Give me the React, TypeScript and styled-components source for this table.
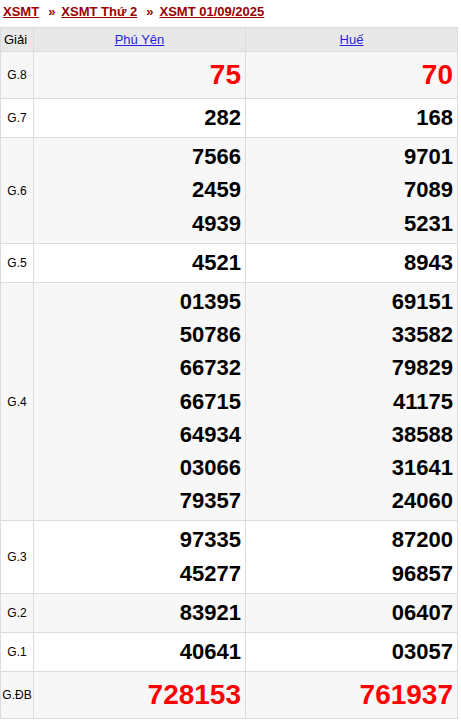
import React from 'react';
import styled, { createGlobalStyle } from 'styled-components';

const GlobalStyle = createGlobalStyle`
  html, body {
    margin: 0;
    padding: 0;
    background: #fff;
    font-family: "Liberation Sans", Arial, sans-serif;
  }
`;

interface Prize {
  label: string;
  results: string[][];
  big?: boolean;
}

const provinces = ['Phú Yên', 'Huế'];

const prizes: Prize[] = [
  { label: 'G.8', results: [['75'], ['70']], big: true },
  { label: 'G.7', results: [['282'], ['168']] },
  { label: 'G.6', results: [['7566', '2459', '4939'], ['9701', '7089', '5231']] },
  { label: 'G.5', results: [['4521'], ['8943']] },
  {
    label: 'G.4',
    results: [
      ['01395', '50786', '66732', '66715', '64934', '03066', '79357'],
      ['69151', '33582', '79829', '41175', '38588', '31641', '24060'],
    ],
  },
  { label: 'G.3', results: [['97335', '45277'], ['87200', '96857']] },
  { label: 'G.2', results: [['83921'], ['06407']] },
  { label: 'G.1', results: [['40641'], ['03057']] },
  { label: 'G.ĐB', results: [['728153'], ['761937']], big: true },
];

const Breadcrumb = styled.div`
  height: 27px;
  padding-left: 3px;
  line-height: 23px;
  font-size: 13px;
  font-weight: bold;
  color: #990000;
  white-space: nowrap;
`;

const Crumb = styled.a`
  color: #990000;
  text-decoration: underline;
`;

const Sep = styled.span`
  margin: 0 6px 0 9px;
`;

const Table = styled.table`
  width: 457px;
  border-collapse: collapse;
  table-layout: fixed;
  border: 1px solid #dcdcdc;
`;

const Col = styled.col<{ $w: number }>`
  width: ${(p) => p.$w}px;
`;

const HeadCell = styled.th<{ $left?: boolean }>`
  height: 23px;
  padding: 0 0 0 ${(p) => (p.$left ? '3px' : '0')};
  background: #e8e8e8;
  border: 1px solid #dcdcdc;
  font-size: 13px;
  font-weight: normal;
  text-align: ${(p) => (p.$left ? 'left' : 'center')};
  color: #000;
`;

const ProvinceLink = styled.a`
  color: #2b1ee0;
  text-decoration: underline;
`;

const Row = styled.tr<{ $shade: boolean }>`
  background: ${(p) => (p.$shade ? '#f7f7f7' : '#fff')};
`;

const LabelCell = styled.td`
  border: 1px solid #dcdcdc;
  padding: 0;
  font-size: 12px;
  text-align: center;
  vertical-align: middle;
  color: #000;
  white-space: nowrap;
`;

const NumCell = styled.td`
  border: 1px solid #dcdcdc;
  padding: 2px 4px 3px 4px;
  text-align: right;
  vertical-align: middle;
`;

const Num = styled.div<{ $big?: boolean }>`
  font-weight: bold;
  font-size: ${(p) => (p.$big ? '28px' : '22px')};
  line-height: ${(p) => (p.$big ? '41px' : '33.2px')};
  color: ${(p) => (p.$big ? '#ff0000' : '#000')};
`;

export default function App() {
  return (
    <>
      <GlobalStyle />
      <Breadcrumb>
        <Crumb>XSMT</Crumb>
        <Sep>»</Sep>
        <Crumb>XSMT Thứ 2</Crumb>
        <Sep>»</Sep>
        <Crumb>XSMT 01/09/2025</Crumb>
      </Breadcrumb>
      <Table>
        <colgroup>
          <Col $w={33} />
          <Col $w={212} />
          <Col $w={212} />
        </colgroup>
        <thead>
          <tr>
            <HeadCell $left>Giải</HeadCell>
            {provinces.map((p) => (
              <HeadCell key={p}>
                <ProvinceLink>{p}</ProvinceLink>
              </HeadCell>
            ))}
          </tr>
        </thead>
        <tbody>
          {prizes.map((prize, i) => (
            <Row key={prize.label} $shade={i % 2 === 0}>
              <LabelCell>{prize.label}</LabelCell>
              {prize.results.map((col, j) => (
                <NumCell key={j}>
                  {col.map((n) => (
                    <Num key={n} $big={prize.big}>{n}</Num>
                  ))}
                </NumCell>
              ))}
            </Row>
          ))}
        </tbody>
      </Table>
    </>
  );
}
